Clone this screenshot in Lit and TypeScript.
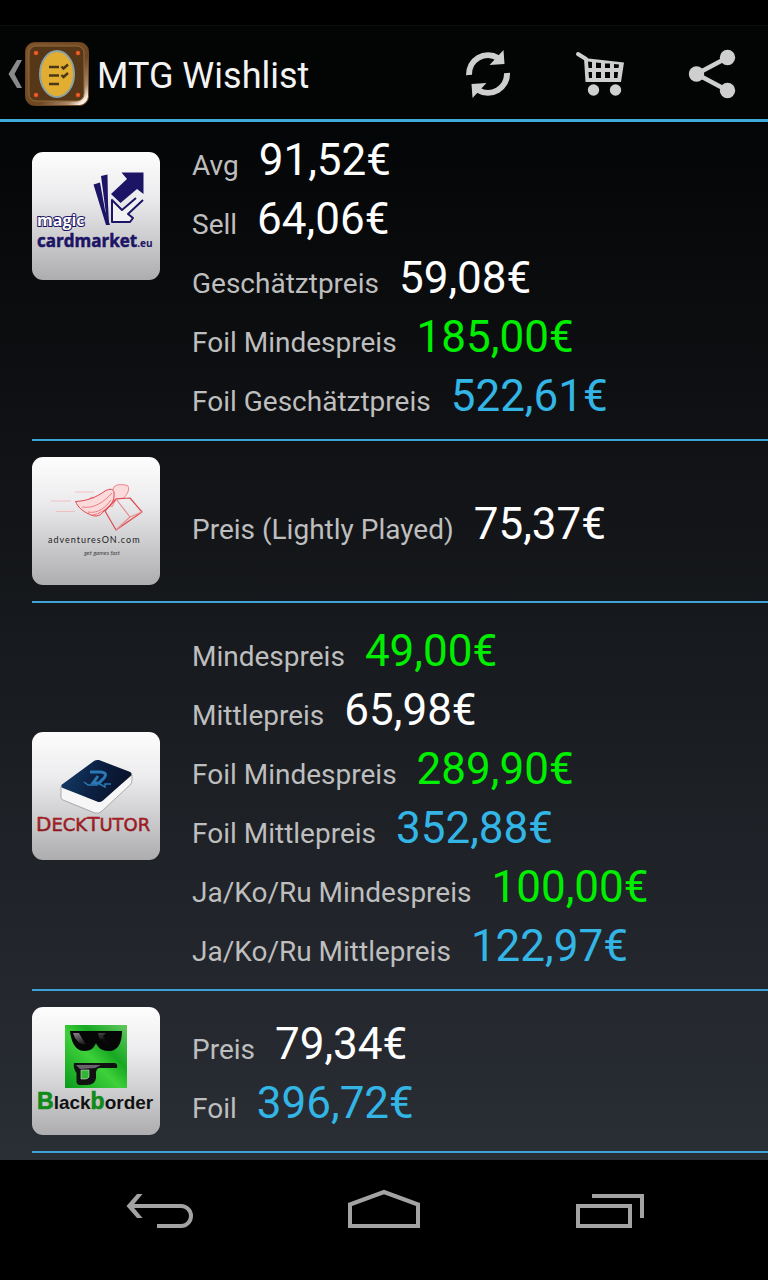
import { LitElement, html, css, svg, TemplateResult } from "lit";
import { customElement } from "lit/decorators.js";
import { classMap } from "lit/directives/class-map.js";

type Tone = "plain" | "low" | "trend";

interface Price {
  label: string;
  value: string;
  tone: Tone;
}

interface Shop {
  logo: TemplateResult;
  prices: Price[];
}

const plateGradient = (id: string) => svg`
  <linearGradient id=${id} x1="0" y1="0" x2="0" y2="1">
    <stop offset="0" stop-color="#fdfdfd" />
    <stop offset="0.35" stop-color="#ececee" />
    <stop offset="1" stop-color="#adadaf" />
  </linearGradient>`;

const cardmarketLogo = html`
  <svg class="logo" viewBox="0 0 128 128" role="img" aria-label="magic cardmarket.eu">
    <defs>${plateGradient("plate-a")}</defs>
    <rect width="128" height="128" rx="11" fill="url(#plate-a)" />
    <g fill="#1c1464">
      <path d="M61.500 32.500 68 30.500 73 58 78 73 74 73Z" />
      <path d="M69 24 75.500 22.500 76 52 77 72 74 62Z" />
      <path d="M89.500 20.500H111.500V42L105 37 88.500 51 79 42 95 27Z" />
    </g>
    <path d="M111 48 96 62 101 66 98 70H80V48L89 57 106 46" fill="#f1f1f3" />
    <path d="M111 48 96 62 101 66 98 70H80V48L90 58 104 46"
      fill="none" stroke="#1c1464" stroke-width="2" stroke-linejoin="round" />
    <text x="5" y="74" font-family="Open Sans" font-weight="700" font-size="16"
      fill="#fff" stroke="#1c1464" stroke-width="2" paint-order="stroke">magic</text>
    <text x="5" y="95" font-family="Open Sans" font-weight="700" font-size="17"
      fill="#1c1464" stroke="#1c1464" stroke-width="0.500">cardmarket<tspan font-size="10" stroke="none">.eu</tspan></text>
  </svg>`;

const adventuresLogo = html`
  <svg class="logo" viewBox="0 0 128 128" role="img" aria-label="adventuresON.com">
    <defs>${plateGradient("plate-b")}</defs>
    <rect width="128" height="128" rx="11" fill="url(#plate-b)" />
    <g fill="none" stroke="#f5b4b6" stroke-width="0.800">
      <path d="M43 35H62M19 44H39M24 54.500H43" />
    </g>
    <g fill="#fbdadb" stroke="#e0444c" stroke-width="1" stroke-linejoin="round">
      <path d="M82 30C84 27 92 27 96 29 98 33 95 37 92 41L84 42 80 50 75 46Z" stroke="#ee8288" />
      <path d="M43.500 44.500C55 44 65 40 73 34 78 31 82 32 82 36 83 44 78 50 72 54 68 60 62 60 57 57 50 54 46 50 43.500 44.500Z" />
      <path d="M50 50C62 52 72 45 80 36M56 55C66 57 74 50 79 43M60 58C68 57 74 52 78 48M57 42 60 40 61 42" fill="none" stroke="#ec7b80" />
    </g>
    <g fill="none" stroke="#dd4a50" stroke-width="1.200" stroke-linejoin="round">
      <path d="M73 54 84 42 98 41 110 55 84 73Z" />
      <path d="M84 42 98 60 110 55M98 60 84 73" stroke="#e98a8d" />
    </g>
    <text x="16" y="86" font-family="Lato" font-size="9" letter-spacing="1" fill="#222">adventuresON.com</text>
    <text x="52" y="98" font-family="Lato" font-style="italic" font-size="6" fill="#444">get games fast</text>
  </svg>`;

const decktutorLogo = html`
  <svg class="logo" viewBox="0 0 128 128" role="img" aria-label="DeckTutor">
    <defs>
      ${plateGradient("plate-c")}
      <linearGradient id="deck-top" x1="0" y1="0.400" x2="1" y2="0.600">
        <stop offset="0" stop-color="#143a66" />
        <stop offset="0.500" stop-color="#0b1f40" />
        <stop offset="1" stop-color="#0a1129" />
      </linearGradient>
      <linearGradient id="deck-word" x1="0" y1="0" x2="0" y2="1">
        <stop offset="0" stop-color="#c02a30" />
        <stop offset="1" stop-color="#7a1016" />
      </linearGradient>
    </defs>
    <rect width="128" height="128" rx="11" fill="url(#plate-c)" />
    <path d="M29 55V65Q29 67 31 68L63 81Q67 82 70 79L98 53Q100 51 100 48V43L68 69Z"
      fill="#f6f6f6" stroke="#8d8d8d" stroke-width="0.700" />
    <path d="M62 29Q64 27.500 67 28L97 39.500Q101 41 99 43.500L71 68.500Q68 71 65 69.500L31 56Q28 54.500 30 52.500Z" fill="url(#deck-top)" />
    <g fill="none" stroke="#2a78b4">
      <path d="M58 40H69Q76 41 72 46L67 51H61L66 44" stroke-width="3" />
      <path d="M52 50 56 53H66M66 51 73 55 73 52H79" stroke-width="1.500" />
    </g>
    <text x="4" y="99" font-family="DejaVu Sans" font-size="20" fill="url(#deck-word)"
      stroke="#97191f" stroke-width="0.500">D<tspan font-size="18">ECK</tspan>T<tspan font-size="18">UTOR</tspan></text>
  </svg>`;

const blackborderLogo = html`
  <svg class="logo" viewBox="0 0 128 128" role="img" aria-label="Blackborder">
    <defs>
      ${plateGradient("plate-d")}
      <linearGradient id="face" x1="0" y1="1" x2="1" y2="0">
        <stop offset="0" stop-color="#0a9a1c" />
        <stop offset="0.450" stop-color="#3ed13a" />
        <stop offset="0.650" stop-color="#17a822" />
        <stop offset="1" stop-color="#64c860" />
      </linearGradient>
      <linearGradient id="lens" x1="0" y1="0" x2="1" y2="1">
        <stop offset="0" stop-color="#8a848e" />
        <stop offset="0.700" stop-color="#0a0a0a" />
      </linearGradient>
    </defs>
    <rect width="128" height="128" rx="11" fill="url(#plate-d)" />
    <rect x="33" y="18" width="62" height="63" fill="url(#face)" />
    <path d="M38 24H90C90 36 86 44 77 44 70 44 66 41 64 36 62 41 59 44 52 44 43 44 39 34 38 24Z" fill="#060606" />
    <path d="M41 26H47L54 38Q44 37 41 26ZM66 26H74L71 29 78 38Q67 36 66 26Z" fill="url(#lens)" />
    <path d="M42 56H83Q86 57 85 61H67Q64 62 64 66V71Q63 78 55 78H47Q44 77 44.500 73V66Q41 61 42 56Z" fill="#111" />
    <path d="M44 58H69L63 61 48 62Z" fill="#68636c" />
    <path d="M49 63H57V70Q56 72 53 72H49Z" fill="#2fb733" stroke="#ddd" stroke-width="0.600" />
    <text x="5" y="102" font-family="Liberation Sans" font-weight="700" font-size="19"
      fill="#111"><tspan font-size="23" fill="#108a18" stroke="#108a18" stroke-width="0.600">B</tspan>lack<tspan font-size="23" fill="#108a18" stroke="#108a18" stroke-width="0.600">b</tspan>order</text>
  </svg>`;

const shops: Shop[] = [
  {
    logo: cardmarketLogo,
    prices: [
      { label: "Avg", value: "91,52€", tone: "plain" },
      { label: "Sell", value: "64,06€", tone: "plain" },
      { label: "Geschätztpreis", value: "59,08€", tone: "plain" },
      { label: "Foil Mindespreis", value: "185,00€", tone: "low" },
      { label: "Foil Geschätztpreis", value: "522,61€", tone: "trend" },
    ],
  },
  {
    logo: adventuresLogo,
    prices: [{ label: "Preis (Lightly Played)", value: "75,37€", tone: "plain" }],
  },
  {
    logo: decktutorLogo,
    prices: [
      { label: "Mindespreis", value: "49,00€", tone: "low" },
      { label: "Mittlepreis", value: "65,98€", tone: "plain" },
      { label: "Foil Mindespreis", value: "289,90€", tone: "low" },
      { label: "Foil Mittlepreis", value: "352,88€", tone: "trend" },
      { label: "Ja/Ko/Ru Mindespreis", value: "100,00€", tone: "low" },
      { label: "Ja/Ko/Ru Mittlepreis", value: "122,97€", tone: "trend" },
    ],
  },
  {
    logo: blackborderLogo,
    prices: [
      { label: "Preis", value: "79,34€", tone: "plain" },
      { label: "Foil", value: "396,72€", tone: "trend" },
    ],
  },
];

@customElement("action-bar")
class ActionBar extends LitElement {
  static styles = css`
    :host {
      display: block;
    }
    .bar {
      display: flex;
      align-items: center;
      box-sizing: border-box;
      height: 96px;
      padding: 3px 0 0 8px;
      border-bottom: 3px solid #3fabdb;
      background: #030404;
    }
    button {
      display: flex;
      align-items: center;
      justify-content: center;
      margin: 0;
      padding: 0;
      border: 0;
      background: none;
      color: #cfcfcf;
    }
    .up {
      gap: 1px;
    }
    .title {
      flex: 1;
      margin: 0;
      padding: 4px 0 0 8px;
      font: 400 36px/48px Roboto, sans-serif;
      color: #f3f3f3;
      white-space: nowrap;
    }
    .action {
      width: 112px;
      height: 88px;
    }
    svg {
      display: block;
    }
  `;

  render() {
    return html`
      <header class="bar">
        <button class="up" aria-label="Back">
          <svg width="16" height="64" viewBox="0 0 16 64">
            <path d="M9 18H14L6.500 32 14 46H9L0.500 32Z" fill="#8a8a8c" />
          </svg>
          <svg width="64" height="64" viewBox="0 0 64 64">
            <defs>
              <linearGradient id="rim" x1="0" y1="0" x2="1" y2="1">
                <stop offset="0" stop-color="#80562c" />
                <stop offset="0.600" stop-color="#6e4722" />
                <stop offset="0.820" stop-color="#a98a6c" />
                <stop offset="0.930" stop-color="#fff4ea" />
                <stop offset="1" stop-color="#8a6642" />
              </linearGradient>
            </defs>
            <rect x="0.500" y="0.500" width="63" height="63" rx="9" fill="url(#rim)" stroke="#6b4521" />
            <rect x="4" y="4" width="55" height="55" rx="7" fill="#563717" stroke="#936a3d" />
            <ellipse cx="32" cy="32" rx="17" ry="23" fill="#e2ae32" stroke="#8ba3a6" stroke-width="2" />
            <g fill="#f0642c" stroke="#a93612" stroke-width="0.600">
              <rect x="9" y="9" width="4" height="4" rx="1" />
              <rect x="51" y="9" width="4" height="4" rx="1" />
              <rect x="9" y="51" width="4" height="4" rx="1" />
              <rect x="51" y="51" width="4" height="4" rx="1" />
            </g>
            <path d="M24 25H34M24 33.500H34M24 42H34M36.500 24.500 38.500 26.500 43 22.500M36.500 33 38.500 35 43 31"
              fill="none" stroke="#4b3717" stroke-width="2.400" />
          </svg>
        </button>
        <h1 class="title">MTG Wishlist</h1>
        <button class="action" aria-label="Refresh">
          <svg width="64" height="64" viewBox="0 0 64 64">
            <g fill="currentColor">
              <path d="M13 33A19 19 0 0 1 42 16" fill="none" stroke="currentColor" stroke-width="6" />
              <path d="M47.500 8 48.500 22 33.500 23Z" />
            </g>
            <g fill="currentColor" transform="rotate(180 32 32)">
              <path d="M13 33A19 19 0 0 1 42 16" fill="none" stroke="currentColor" stroke-width="6" />
              <path d="M47.500 8 48.500 22 33.500 23Z" />
            </g>
          </svg>
        </button>
        <button class="action" aria-label="Cart">
          <svg width="64" height="64" viewBox="0 0 64 64">
            <path d="M10 12 18 17" stroke="currentColor" stroke-width="4" stroke-linecap="round" />
            <path fill="currentColor" fill-rule="evenodd"
              d="M16 16 56 20.500 53 40H17.500ZM20 19.500 20.500 26H24V20ZM28 20.500V26H33V21ZM37 21.500V26H42V21.500ZM46 22V26H50.500L51 22.500ZM20.500 30 21 36H24V30ZM28 30V36H33V30ZM37 30V36H42V30ZM46 30V36H49.500L50 30Z" />
            <circle cx="25.500" cy="48" r="5.700" fill="currentColor" />
            <circle cx="47.500" cy="48" r="5.700" fill="currentColor" />
          </svg>
        </button>
        <button class="action" aria-label="Share">
          <svg width="64" height="64" viewBox="0 0 64 64">
            <path d="M47.500 15.500 16.500 32 47.500 48.500" fill="none" stroke="currentColor" stroke-width="4.500" />
            <g fill="currentColor">
              <circle cx="16.500" cy="32" r="7.700" />
              <circle cx="47.500" cy="15.500" r="7.700" />
              <circle cx="47.500" cy="48.500" r="7.700" />
            </g>
          </svg>
        </button>
      </header>
    `;
  }
}

@customElement("shop-list")
class ShopList extends LitElement {
  static styles = css`
    :host {
      display: block;
    }
    .list {
      margin: 0;
      padding: 0 0 0 32px;
      list-style: none;
    }
    .shop {
      display: flex;
      align-items: center;
      gap: 32px;
      padding: 16px 0;
      border-bottom: 2px solid #3ba3d6;
    }
    .shop.first {
      align-items: flex-start;
      padding-top: 6px;
    }
    .first .logo {
      margin-top: 24px;
    }
    .logo {
      display: block;
      flex: none;
      width: 128px;
      height: 128px;
    }
    .prices {
      flex: 1;
      min-width: 0;
      margin: 0;
    }
    .price {
      display: flex;
      align-items: baseline;
      gap: 20px;
      padding-top: 6px;
    }
    .label {
      font-size: 28px;
      line-height: 36px;
      color: #bebebe;
    }
    .value {
      margin: 0;
      font-size: 44px;
      line-height: 53px;
      color: #ffffff;
    }
    .value.low {
      color: #00ee00;
    }
    .value.trend {
      color: #33b5e5;
    }
  `;

  render() {
    return html`
      <ul class="list">
        ${shops.map(
          (shop, i) => html`
            <li class=${classMap({ shop: true, first: i === 0 })}>
              ${shop.logo}
              <dl class="prices">
                ${shop.prices.map(
                  (p) => html`
                    <div class="price">
                      <dt class="label">${p.label}</dt>
                      <dd class=${classMap({ value: true, [p.tone]: true })}>${p.value}</dd>
                    </div>
                  `
                )}
              </dl>
            </li>
          `
        )}
      </ul>
    `;
  }
}

@customElement("nav-bar")
class NavBar extends LitElement {
  static styles = css`
    :host {
      display: block;
    }
    .nav {
      display: flex;
      padding: 0 48px 24px;
      background: #000;
    }
    .key {
      display: flex;
      flex: 1;
      justify-content: center;
      margin: 0;
      padding: 0;
      border: 0;
      background: none;
      color: #a3a3a3;
    }
    svg {
      display: block;
    }
  `;

  render() {
    return html`
      <nav class="nav">
        <button class="key" aria-label="Back">
          <svg width="96" height="96" viewBox="0 0 96 96">
            <path d="M18 46H69a10 10 0 0 1 0 20H45" fill="none" stroke="currentColor" stroke-width="4" />
            <path d="M25 34H30.500L20.500 46 30.500 58H25L14.500 46Z" fill="currentColor" />
          </svg>
        </button>
        <button class="key" aria-label="Home">
          <svg width="96" height="96" viewBox="0 0 96 96">
            <path d="M14 44.500 48 32 82 44.500V66H14Z" fill="none" stroke="currentColor" stroke-width="4" />
          </svg>
        </button>
        <button class="key" aria-label="Recent apps">
          <svg width="96" height="96" viewBox="0 0 96 96">
            <path d="M18 46H70V66H18ZM32 36H82V58" fill="none" stroke="currentColor" stroke-width="4" />
          </svg>
        </button>
      </nav>
    `;
  }
}

@customElement("app-root")
class AppRoot extends LitElement {
  static styles = css`
    :host {
      display: flex;
      flex-direction: column;
      min-height: 100vh;
      background: #000;
      font-family: Roboto, sans-serif;
    }
    .status {
      box-sizing: border-box;
      height: 26px;
      border-bottom: 1px solid #0c0c0c;
      background: #000;
    }
    .content {
      flex: 1;
      background: linear-gradient(#040506, #2a2e35);
    }
  `;

  render() {
    return html`
      <div class="status"></div>
      <action-bar></action-bar>
      <main class="content"><shop-list></shop-list></main>
      <nav-bar></nav-bar>
    `;
  }
}
